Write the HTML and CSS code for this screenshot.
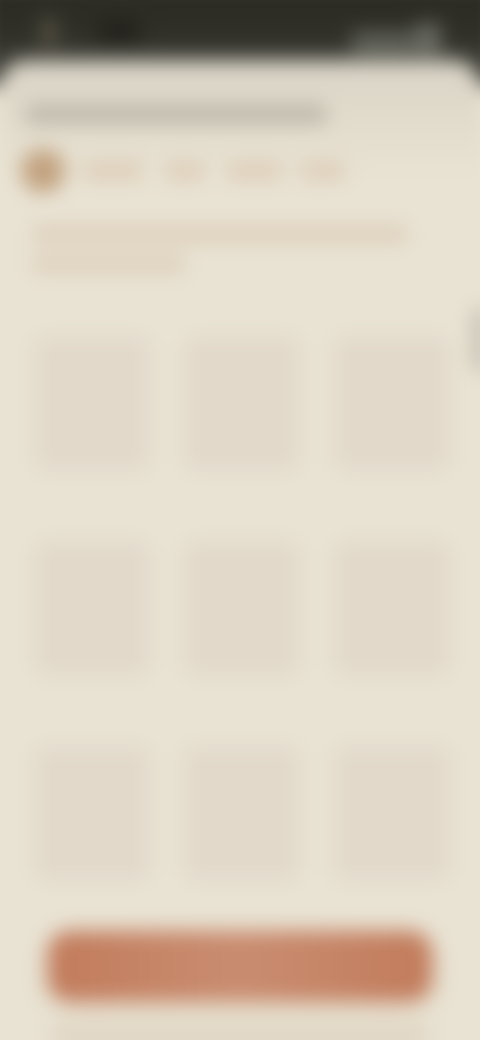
FILE: index.html
```html
<!DOCTYPE html>
<html lang="en">
<head>
<meta charset="utf-8">
<title>Blurred selection sheet</title>
<link rel="stylesheet" href="styles.css">
</head>
<body>
<div class="app">
  <div class="status">
    <div class="status-left"><span class="dot"></span><span class="clock"></span></div>
    <div class="status-right"><span class="net"></span><span class="batt"></span></div>
  </div>
  <main class="sheet">
    <div class="edge-tab"></div>
    <div class="title"></div>
    <div class="meta">
      <span class="avatar"></span>
      <span class="word w1"></span><span class="word w2"></span><span class="word w3"></span><span class="word w4"></span>
    </div>
    <div class="desc"><div class="line l1"></div><div class="line l2"></div></div>
    <div class="grid">
      <div class="cell"></div><div class="cell"></div><div class="cell"></div>
      <div class="cell"></div><div class="cell"></div><div class="cell"></div>
      <div class="cell"></div><div class="cell"></div><div class="cell"></div>
    </div>
    <div class="cta"></div>
    <div class="foot"></div>
  </main>
</div>
</body>
</html>
```
FILE: styles.css
```css
html, body { margin: 0; padding: 0; height: 100%; overflow: hidden; background: #e9e3d4; }
.app {
  width: 520px; height: 1080px; margin: -20px;
  display: flex; flex-direction: column;
  background: linear-gradient(#2a2a23 0, #2e2e27 50px, #3d3d36 80px, #3d3d36 106px, #e9e3d4 106px);
  filter: blur(10px);
  position: relative;
}
.status { height: 80px; flex: none; display: flex; justify-content: space-between; align-items: flex-start; padding: 38px 60px 0 62px; box-sizing: border-box; }
.status-left, .status-right { display: flex; align-items: center; }
.dot { width: 14px; height: 28px; background: #5c5745; }
.clock { width: 42px; height: 22px; margin-left: 42px; background: #22221c; }
.net { width: 62px; height: 22px; margin-top: 14px; background: #62645a; }
.batt { width: 24px; height: 30px; margin-left: 2px; margin-top: 6px; background: #6e7066; }
.sheet {
  flex: 1; position: relative; min-height: 0;
  margin: 0 20px;
  border-radius: 26px 26px 0 0;
  background: linear-gradient(#d8d3c6 0, #dfd9ca 40px, #e9e3d4 120px);
  padding: 45px 0 0 0;
  display: flex; flex-direction: column;
}
.edge-tab { position: absolute; right: -8px; top: 248px; width: 16px; height: 64px; border-radius: 8px 0 0 8px; background: #c6c1b3; }
.title { margin-left: 26px; width: 300px; height: 20px; background: #bcb7a9; }
.meta { display: flex; align-items: center; margin-top: 27px; height: 40px; margin-left: 21px; }
.avatar { width: 44px; height: 44px; border-radius: 50%; background: #c2a27f; }
.word { height: 20px; background: #dfcfba; }
.w1 { width: 60px; margin-left: 18px; }
.w2 { width: 40px; margin-left: 22px; }
.w3 { width: 55px; margin-left: 22px; }
.w4 { width: 45px; margin-left: 18px; }
.desc { margin-left: 33px; margin-top: 34px; }
.line { height: 18px; background: #decfbb; }
.l1 { width: 374px; }
.l2 { width: 152px; margin-top: 12px; }
.grid { margin-left: 34px; margin-top: 63px; display: grid; grid-template-columns: repeat(3, 116px); grid-auto-rows: 135px; column-gap: 34px; row-gap: 70px; }
.cell { background: #e2d9cb; border-radius: 14px; }
.cta { margin: 50px 0 0 48px; width: 384px; height: 72px; border-radius: 22px; background: linear-gradient(90deg, #c27c5c, #c98c70 50%, #c27c5c); box-shadow: 0 6px 22px #dccdb6; }
.foot { margin: 20px 0 0 50px; width: 380px; height: 40px; background: #e2d8c7; }
```
